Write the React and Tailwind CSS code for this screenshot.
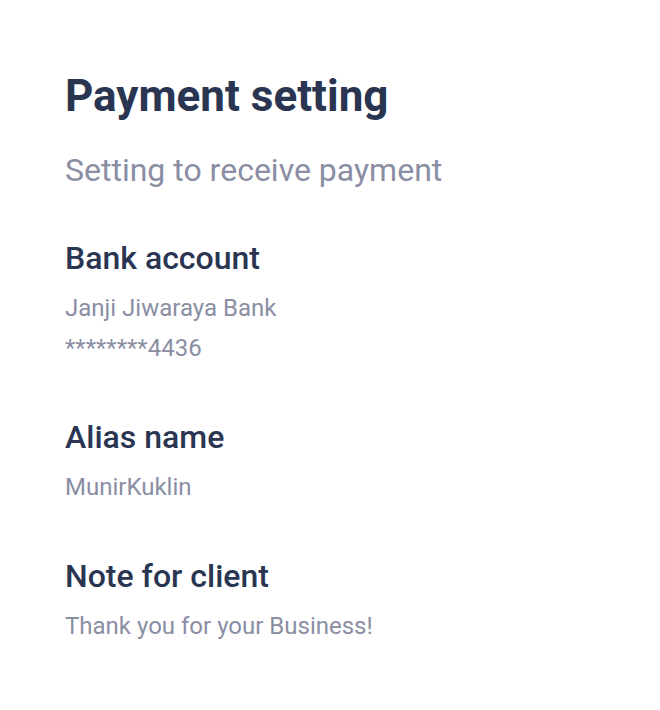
export default function App() {
  const sections = [
    { title: "Bank account", lines: ["Janji Jiwaraya Bank", "********4436"] },
    { title: "Alias name", lines: ["MunirKuklin"] },
    { title: "Note for client", lines: ["Thank you for your Business!"] },
  ];

  return (
    <div className="min-h-[710px] w-[660px] bg-white px-[65px] pt-[70px] font-['Roboto',sans-serif]">
      <h1 className="text-[44px] font-bold leading-[52px] text-[#2a3552]">Payment setting</h1>
      <p className="mt-[28px] text-[32px] leading-[40px] text-[#8a8ea3]">Setting to receive payment</p>

      <div className="mt-[50px] flex flex-col gap-[51px]">
        {sections.map((s, i) => (
          <div key={i}>
            <h2 className="text-[32px] font-medium leading-[36px] text-[#2a3552]">{s.title}</h2>
            <div className="mt-[12px] flex flex-col">
              {s.lines.map((l, j) => (
                <div key={j} className="text-[24px] leading-[40px] text-[#8a8ea3]">{l}</div>
              ))}
            </div>
          </div>
        ))}
      </div>
    </div>
  );
}
